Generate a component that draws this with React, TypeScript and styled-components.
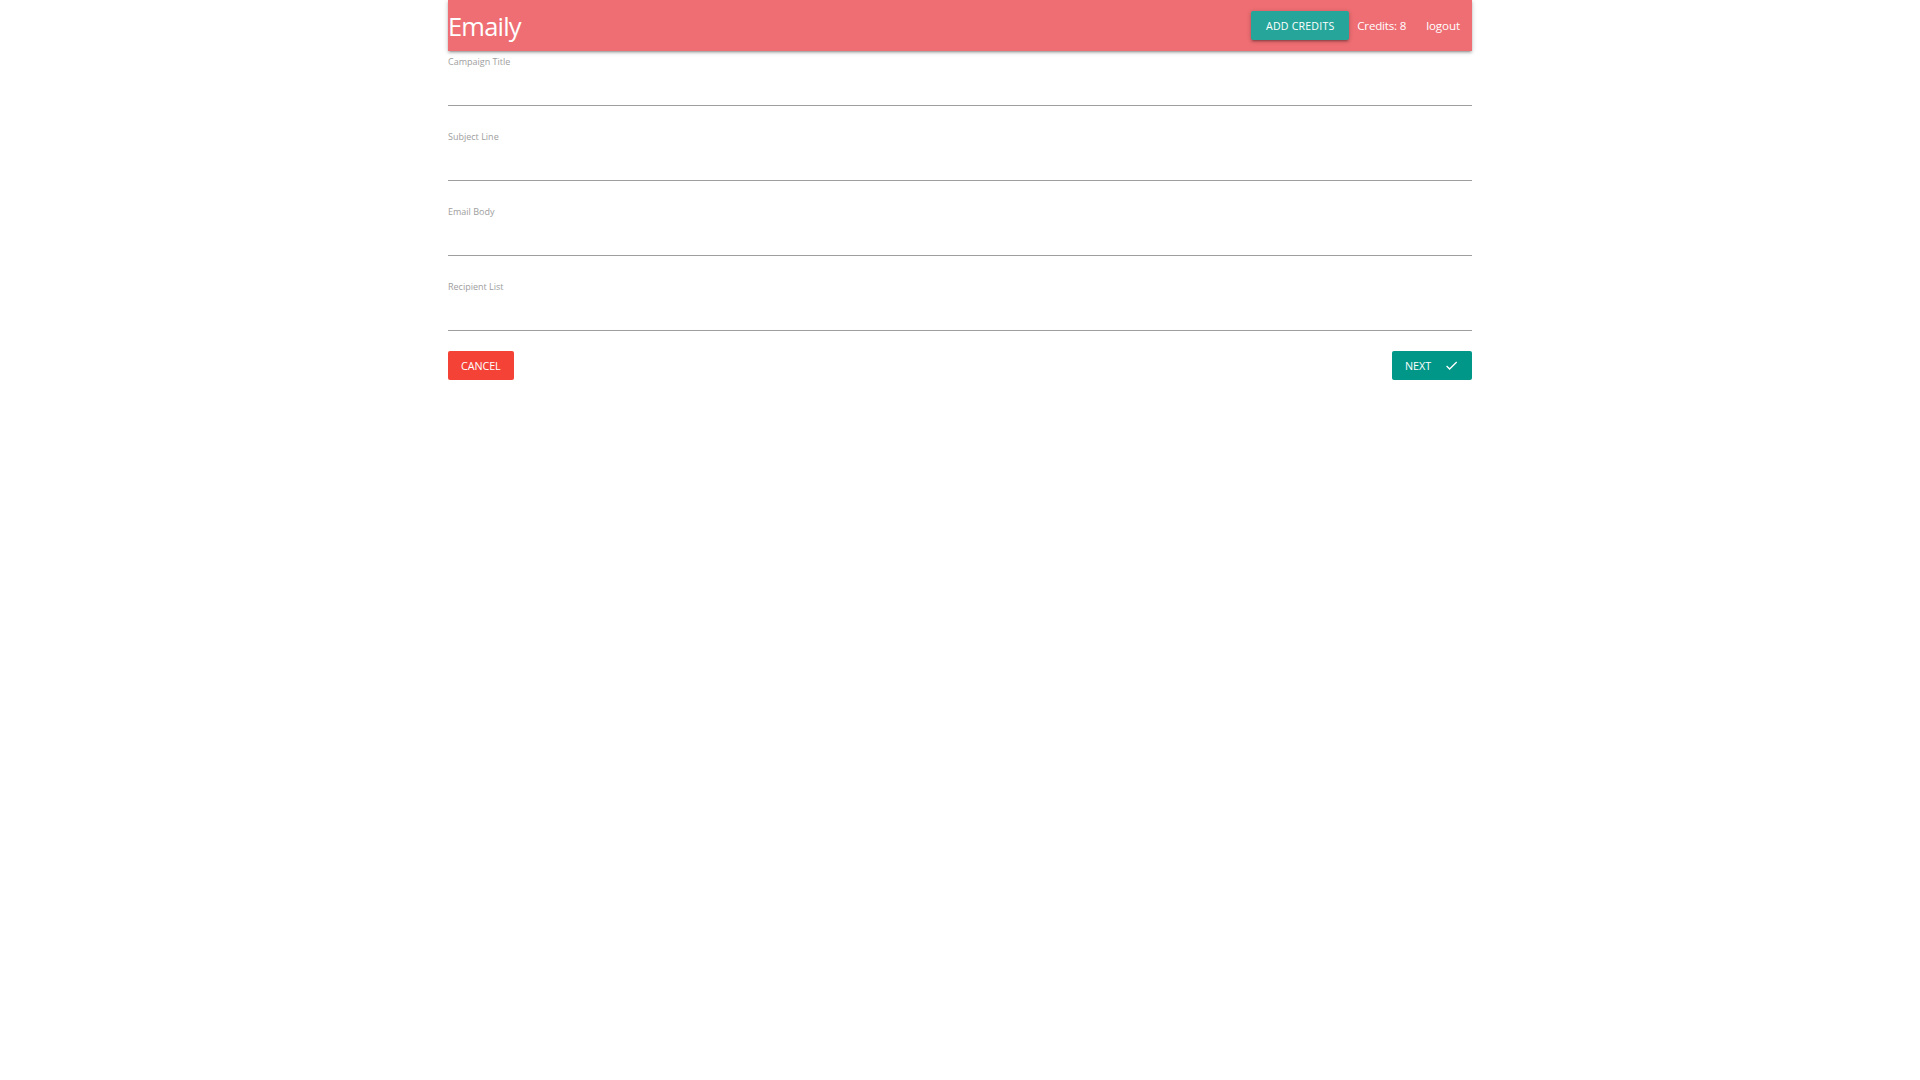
import styled, { createGlobalStyle } from "styled-components";

const GlobalStyle = createGlobalStyle`
  html, body {
    margin: 0;
    padding: 0;
    background: #ffffff;
  }
  body {
    font-family: "Open Sans", "Noto Sans", "Liberation Sans", sans-serif;
    color: rgba(0, 0, 0, 0.87);
  }
  * {
    box-sizing: border-box;
  }
`;

const FIELDS = [
  { name: "title", label: "Campaign Title" },
  { name: "subject", label: "Subject Line" },
  { name: "body", label: "Email Body" },
  { name: "recipients", label: "Recipient List" },
];

function CheckIcon() {
  return (
    <svg width="15" height="15" viewBox="0 0 24 24" fill="#ffffff">
      <path d="M9 16.17L4.83 12l-1.42 1.41L9 19 21 7l-1.41-1.41z" />
    </svg>
  );
}

export default function App() {
  return (
    <>
      <GlobalStyle />
      <Container>
        <Nav>
          <Brand href="#">Emaily</Brand>
          <NavList>
            <li>
              <AddCredits type="button">Add Credits</AddCredits>
            </li>
            <Credits>Credits: 8</Credits>
            <li>
              <NavLink href="#">logout</NavLink>
            </li>
          </NavList>
        </Nav>

        <Form onSubmit={(e) => e.preventDefault()}>
          <FieldList>
            {FIELDS.map((field) => (
              <Field key={field.name}>
                <Label htmlFor={field.name}>{field.label}</Label>
                <Input id={field.name} name={field.name} type="text" />
              </Field>
            ))}
          </FieldList>
          <Actions>
            <Button type="button" $color="#f44336">
              Cancel
            </Button>
            <Button type="submit" $color="#009688">
              Next
              <IconSlot>
                <CheckIcon />
              </IconSlot>
            </Button>
          </Actions>
        </Form>
      </Container>
    </>
  );
}

const Container = styled.div`
  width: 1024px;
  margin: 0 auto;
`;

const Nav = styled.nav`
  height: 51px;
  display: flex;
  align-items: center;
  justify-content: space-between;
  background-color: #ee6e73;
  box-shadow: 0 2px 2px 0 rgba(0, 0, 0, 0.14), 0 3px 1px -2px rgba(0, 0, 0, 0.12),
    0 1px 5px 0 rgba(0, 0, 0, 0.2);
`;

const Brand = styled.a`
  color: #ffffff;
  text-decoration: none;
  font-size: 25.5px;
  line-height: 51px;
  margin-top: 2px;
  letter-spacing: -0.8px;
`;

const NavList = styled.ul`
  display: flex;
  align-items: center;
  list-style: none;
  margin: 0;
  padding: 0 12px 0 0;
  height: 100%;

  li {
    display: flex;
    align-items: center;
  }
`;

const AddCredits = styled.button`
  height: 29px;
  width: 98px;
  padding: 0;
  border: none;
  border-radius: 2px;
  background-color: #26a69a;
  color: #ffffff;
  font-family: inherit;
  font-size: 10.6px;
  letter-spacing: 0.2px;
  text-transform: uppercase;
  margin-right: 8px;
  cursor: pointer;
  box-shadow: 0 2px 2px 0 rgba(0, 0, 0, 0.14), 0 3px 1px -2px rgba(0, 0, 0, 0.12),
    0 1px 5px 0 rgba(0, 0, 0, 0.2);
`;

const Credits = styled.li`
  color: #ffffff;
  font-size: 11.6px;
  letter-spacing: -0.2px;
  margin-right: 20px;
`;

const NavLink = styled.a`
  color: #ffffff;
  text-decoration: none;
  font-size: 11.6px;
  letter-spacing: -0.1px;
`;

const Form = styled.form`
  padding-top: 5px;
`;

const FieldList = styled.div`
  display: flex;
  flex-direction: column;
  gap: 25px;
  margin-bottom: 20px;
`;

const Field = styled.div`
  display: flex;
  flex-direction: column;
`;

const Label = styled.label`
  display: block;
  height: 12px;
  font-size: 9px;
  line-height: 12px;
  color: #9e9e9e;
`;

const Input = styled.input`
  display: block;
  width: 100%;
  height: 38px;
  margin: 0;
  padding: 0;
  border: none;
  border-bottom: 1px solid #9e9e9e;
  background: transparent;
  outline: none;
  font-family: inherit;
  font-size: 12.8px;
`;

const Actions = styled.div`
  display: flex;
  justify-content: space-between;
  align-items: center;
`;

const Button = styled.button<{ $color: string }>`
  display: inline-flex;
  align-items: center;
  height: 29px;
  padding: 0 13px;
  border: none;
  border-radius: 2px;
  background-color: ${(p) => p.$color};
  color: #ffffff;
  font-family: inherit;
  font-size: 10.8px;
  text-transform: uppercase;
  letter-spacing: -0.1px;
  cursor: pointer;
`;

const IconSlot = styled.span`
  display: inline-flex;
  margin-left: 13px;
`;
